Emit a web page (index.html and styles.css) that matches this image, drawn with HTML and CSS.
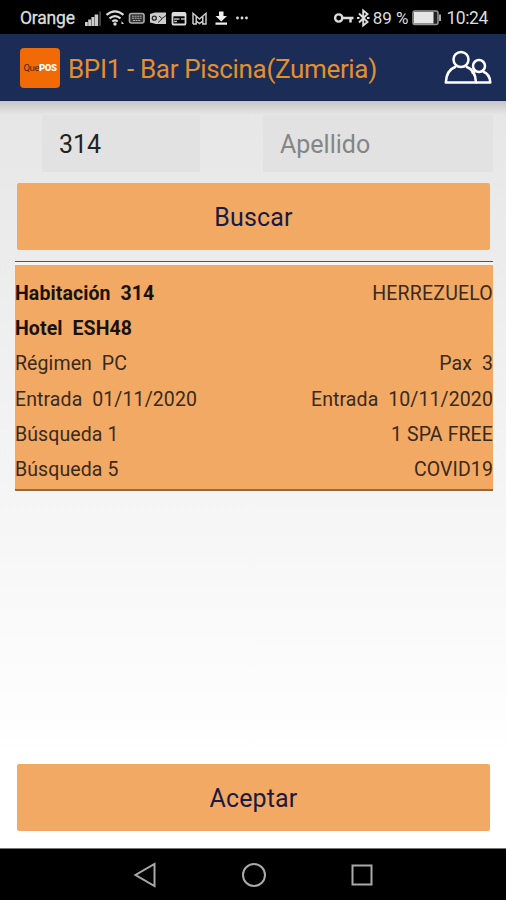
FILE: index.html
```html
<!DOCTYPE html>
<html lang="es">
  <head>
    <meta charset="UTF-8" />
    <title>BPI1 - Bar Piscina(Zumeria)</title>
    <link rel="stylesheet" href="styles.css">
  </head>
  <body>
    <div class="status-bar">
      <span class="carrier">Orange</span>
      <svg class="status-icons" width="168" height="34" viewBox="0 0 168 34">
        <!-- signal -->
        <path fill="#ccc" d="M1 22h2.800v4H1zM4.200 19.500H7V26H4.200zM7.400 17h2.800v9H7.400zM10.600 14.500h3.600V26h-3.600z" />
        <path fill="#555" d="M15.300 11.500h1.500V26h-1.500z" />
        <!-- wifi -->
        <g fill="none" stroke="#ddd" stroke-width="2.200">
          <path d="M22.500 14.800q8.500-7 17 0M25.500 18.300q5.500-4.500 11 0M28.300 21.500q2.700-2.200 5.400 0" />
        </g>
        <circle cx="31" cy="24" r="1.700" fill="#ddd" />
        <path d="M37.500 21l2.500 3h-2.500z" fill="#ddd" />
        <!-- keyboard -->
        <rect x="45.500" y="13.500" width="14.500" height="9.500" rx="2" fill="#333" stroke="#aaa" stroke-width="1.600" />
        <path d="M48 16.300h9.500M48 18.300h9.500M49 20.500h7.500" stroke="#aaa" stroke-width="1.100" stroke-dasharray="2 .6" />
        <!-- outlook -->
        <path fill="#ccc" d="M66 14l5-1.500h11V24H72l-6-1.500z" />
        <circle cx="70.300" cy="18.200" r="2" fill="none" stroke="#222" stroke-width="1.300" />
        <path d="M75 16l3 2.500 4-3M74 22.500l4-3.500" fill="none" stroke="#222" />
        <!-- news -->
        <rect x="88.500" y="13" width="13" height="11.500" rx="1" fill="none" stroke="#ddd" stroke-width="1.800" />
        <path d="M88 14.800h14" stroke="#ddd" stroke-width="3" />
        <path d="M90 19h5.500M97 19h4M90 21.500h3" stroke="#bbb" stroke-width="1.500" />
        <!-- mail -->
        <path d="M109 24V13.300l6.500 5.700 6.500-5.700V24h-3.200v-7.500M109 24h3.200v-7.500M112.200 21l3.300 2.500 3.300-2.500" fill="none" stroke="#ccc" stroke-width="1.500" />
        <!-- download -->
        <path fill="#eee" d="M135 11.500h4.500V16h3.500l-5.700 5.500-5.800-5.500h3.500zM131.500 22.500h11.500v2.200h-11.500z" />
        <g fill="#ddd">
          <circle cx="153.500" cy="18" r="1.400" />
          <circle cx="158" cy="18" r="1.400" />
          <circle cx="162.500" cy="18" r="1.400" />
        </g>
      </svg>
      <svg class="key-icons" width="38" height="34" viewBox="0 0 38 34">
        <circle cx="5.700" cy="18" r="3.600" fill="none" stroke="#ddd" stroke-width="2.400" />
        <path d="M9 18h11.500M17.500 18v4.500" fill="none" stroke="#ddd" stroke-width="2.500" />
        <path d="M26 13.500l8.500 8.500-4.300 3.500v-15l4.300 3.500-8.500 8.500" fill="none" stroke="#ddd" stroke-width="1.900" />
        <path d="M24 18h2.500M34 18h2.500" stroke="#ddd" stroke-width="2" />
      </svg>
      <span class="battery-level">89 %</span>
      <svg class="battery" width="30" height="16" viewBox="0 0 30 16">
        <rect x="1" y="1" width="25" height="13.500" rx="2" fill="#222" stroke="#999" stroke-width="1.500" />
        <rect x="2" y="2" width="19.500" height="11.500" fill="#e6e6e6" />
        <path d="M28 4.500v6.500" stroke="#bbb" stroke-width="1.800" />
      </svg>
      <span class="clock">10:24</span>
    </div>

    <header class="app-bar">
      <div class="logo"><span>Que</span><b>POS</b></div>
      <h1>BPI1 - Bar Piscina(Zumeria)</h1>
      <svg class="people" width="48" height="38" viewBox="0 0 48 38">
        <g fill="none" stroke="#fff" stroke-width="2.500" stroke-linejoin="round">
          <circle cx="17" cy="10.500" r="7.500" />
          <path d="M12 17.500C5.500 20 2 25.500 1.800 33.500H32C31.800 25.500 28.500 20 22 17.500" />
          <circle cx="35" cy="17" r="6" />
          <path d="M31 22.500L27.500 24M39 22.500C44 24.500 46.200 28.500 46.300 33.500H32" />
        </g>
      </svg>
    </header>

    <main class="content">
      <div class="fields">
        <input class="room" type="text" value="314">
        <input class="surname" type="text" placeholder="Apellido">
      </div>
      <button class="action">Buscar</button>

      <div class="result">
        <div class="row strong"><span>Habitación&nbsp; 314</span><span class="plain">HERREZUELO</span></div>
        <div class="row strong"><span>Hotel&nbsp; ESH48</span></div>
        <div class="row"><span>Régimen&nbsp; PC</span><span>Pax&nbsp; 3</span></div>
        <div class="row"><span>Entrada&nbsp; 01/11/2020</span><span>Entrada&nbsp; 10/11/2020</span></div>
        <div class="row"><span>Búsqueda 1</span><span>1 SPA FREE</span></div>
        <div class="row"><span>Búsqueda 5</span><span>COVID19</span></div>
      </div>

      <button class="action accept">Aceptar</button>
    </main>

    <nav class="nav-bar">
      <svg width="24" height="26" viewBox="0 0 24 26">
        <path d="M21.500 2v22L2.500 13z" fill="none" stroke="#aaa" stroke-width="2" />
      </svg>
      <svg width="26" height="26" viewBox="0 0 26 26">
        <circle cx="13" cy="13" r="11" fill="none" stroke="#aaa" stroke-width="2" />
      </svg>
      <svg width="22" height="22" viewBox="0 0 22 22">
        <rect x="1.500" y="1.500" width="19" height="19" fill="none" stroke="#aaa" stroke-width="2" />
      </svg>
    </nav>
  </body>
</html>
```
FILE: styles.css
```css
* {
  box-sizing: border-box;
}

body {
  margin: 0;
  height: 900px;
  display: flex;
  flex-direction: column;
  overflow: hidden;
  font-family: Roboto, sans-serif;
}

.status-bar {
  height: 34px;
  flex: none;
  display: flex;
  align-items: center;
  padding: 2px 18px 0 20px;
  background: #000;
  color: #ddd;
  font-size: 17.5px;
  white-space: nowrap;
}

.status-bar svg {
  flex: none;
}

.carrier {
  width: 64px;
  letter-spacing: -0.2px;
  -webkit-text-stroke: 0.3px #ddd;
}

.status-icons,
.key-icons {
  margin-top: -2px;
}

.key-icons {
  margin-left: 81px;
}

.battery-level {
  width: 40px;
  margin-left: 2px;
  font-size: 17px;
}

.battery {
  margin-left: 0;
}

.clock {
  margin-left: 4px;
  letter-spacing: -0.4px;
}

.app-bar {
  height: 67px;
  flex: none;
  display: flex;
  align-items: center;
  padding: 1px 14px 0 20px;
  background: #1b2c57;
  border-bottom: 1px solid #17264c;
}

.logo {
  width: 40px;
  height: 40px;
  display: flex;
  align-items: center;
  justify-content: center;
  border-radius: 4px;
  background: #f26a05;
  color: #4a2410;
  font-size: 9.5px;
  letter-spacing: -0.4px;
}

.logo b {
  color: #fff;
  font-weight: 900;
}

.app-bar h1 {
  margin: 2px 0 0 8px;
  color: #e3902d;
  font-size: 26px;
  font-weight: 400;
  letter-spacing: -0.34px;
  white-space: nowrap;
}

.people {
  margin-left: auto;
}

.content {
  flex: 1;
  display: flex;
  flex-direction: column;
  padding: 14px 13px 17px 15px;
  background:
    linear-gradient(rgba(0, 0, 0, 0.14), rgba(0, 0, 0, 0) 14px),
    linear-gradient(#e6e6e6, #fff 88%);
}

.fields {
  display: flex;
  justify-content: space-between;
  padding-left: 27px;
}

.fields input {
  height: 57px;
  padding: 2px 17px 0;
  border: 0;
  background: #e2e2e2;
  color: #222;
  font: 25px Roboto, sans-serif;
}

.fields input::placeholder {
  color: #858585;
}

.room {
  width: 158px;
}

.surname {
  width: 230px;
}

.action {
  height: 67px;
  flex: none;
  margin: 11px 3px 0 2px;
  padding: 2px 0 0;
  border: 0;
  border-radius: 2px;
  background: #f1a964;
  color: #1a1a42;
  font: 25px Roboto, sans-serif;
  letter-spacing: 0.15px;
}

.result {
  margin-top: 11px;
  padding: 14px 0 2px;
  border-top: 1px solid #555;
  border-bottom: 2px solid #95683d;
  background: linear-gradient(#f8f2ec 3px, #f1a964 3px);
}

.row {
  height: 35.2px;
  display: flex;
  align-items: center;
  justify-content: space-between;
  color: #3a2a1b;
  font-size: 19.5px;
  letter-spacing: 0.1px;
}

.strong {
  color: #1a120a;
  font-weight: 700;
}

.plain {
  color: #3a2a1b;
  font-weight: 400;
  letter-spacing: 0.2px;
}

.accept {
  margin-top: auto;
}

.nav-bar {
  height: 52px;
  flex: none;
  display: flex;
  align-items: center;
  justify-content: center;
  gap: 84px;
  border-top: 1px solid #777;
  background: #000;
}
```
